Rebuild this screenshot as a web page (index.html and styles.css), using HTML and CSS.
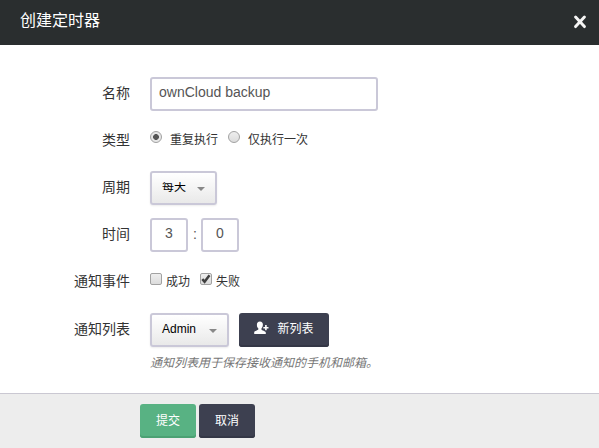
FILE: index.html
```html
<!DOCTYPE html>
<html lang="zh-CN">
<head>
<meta charset="utf-8">
<title>创建定时器</title>
<link rel="stylesheet" href="styles.css">
</head>
<body>
<form class="dialog">
  <header class="header">
    <h1>创建定时器</h1>
    <button type="button" class="close" aria-label="关闭"><svg width="14" height="14" viewBox="0 0 14 14"><path d="M2.6 2 11.4 11.6M11.4 2 2.6 11.6" fill="none" stroke="#f5f5f5" stroke-width="2.9" stroke-linecap="round"/></svg></button>
  </header>
  <main class="fields">
    <div class="row">
      <label class="label" for="name">名称</label>
      <input class="input name" id="name" type="text" value="ownCloud backup">
    </div>
    <div class="row">
      <span class="label">类型</span>
      <label class="choice radio-choice first"><span class="radio checked"></span>重复执行</label>
      <label class="choice radio-choice"><span class="radio"></span>仅执行一次</label>
    </div>
    <div class="row">
      <span class="label">周期</span>
      <div class="select period"><span class="value clipped">每天</span><span class="caret"></span></div>
    </div>
    <div class="row">
      <span class="label">时间</span>
      <input class="input time" type="text" value="3">
      <span class="colon">:</span>
      <input class="input time" type="text" value="0">
    </div>
    <div class="row events">
      <span class="label">通知事件</span>
      <label class="choice success"><span class="checkbox"></span>成功</label>
      <label class="choice"><span class="checkbox"><svg width="12" height="12" viewBox="0 0 12 12"><path d="M2.3 6.1 4.6 8.8 9.5 2.2" fill="none" stroke="#404040" stroke-width="2.5"/></svg></span>失败</label>
    </div>
    <div class="row">
      <span class="label">通知列表</span>
      <div class="select list"><span class="value">Admin</span><span class="caret"></span></div>
      <button type="button" class="btn dark new-list"><svg width="15" height="14" viewBox="0 0 15 14"><path d="M5.9.4C7.9.4 9 1.8 8.9 3.7 8.8 5.4 8.2 6.6 7.5 7.3V8.7C7.8 9.6 11.5 9.8 11.8 11.4V13H.2V11.3C.5 9.8 4 9.5 4.3 8.6V7.3C3.4 6.6 2.9 5.3 2.9 3.7 2.8 1.8 3.9.4 5.9.4Z" fill="#fff"/><path d="M11.9 4.1V9.3M9.3 6.7H14.5" fill="none" stroke="#fff" stroke-width="1.6"/></svg>新列表</button>
    </div>
    <p class="hint">通知列表用于保存接收通知的手机和邮箱。</p>
  </main>
  <footer class="footer">
    <button type="button" class="btn green">提交</button>
    <button type="button" class="btn dark">取消</button>
  </footer>
</form>
</body>
</html>
```
FILE: styles.css
```css
* { box-sizing: border-box; }
body {
  margin: 0;
  background: #fff;
  color: #333;
  font: 14px/20px "Liberation Sans", "Noto Sans CJK SC", sans-serif;
}
button, input { font-family: inherit; }
.dialog { display: flex; flex-direction: column; height: 448px; overflow: hidden; }
.header {
  display: flex;
  align-items: center;
  justify-content: space-between;
  height: 45px;
  padding: 0 12px 4px 20px;
  background: #2a2e2f;
}
.header h1 { margin: 0; color: #fff; font-size: 16px; font-weight: 400; line-height: 24px; }
.close { display: flex; margin-top: 3px; padding: 0; border: 0; background: none; }
.fields { flex: 1; padding-top: 32px; }
.row { display: flex; height: 34px; margin-bottom: 13px; }
.row.events { margin-bottom: 14px; }
.label { width: 130px; margin-right: 20px; padding-top: 6px; text-align: right; }
.input {
  height: 34px;
  padding: 0 7px 5px;
  border: 2px solid #cac8d8;
  border-radius: 3px;
  background: #fff;
  color: #555;
  font-size: 14px;
}
.name { width: 228px; }
.time { width: 38px; text-align: center; }
.colon { width: 13px; padding: 6px 0 0 1px; color: #555; text-align: center; }
.choice { display: flex; padding-top: 6px; font-size: 12px; }
.first { width: 78px; }
.radio {
  width: 12px;
  height: 12px;
  margin: 1px 8px 0 0;
  border: 1px solid #a2a2a2;
  border-radius: 50%;
  background: linear-gradient(#eee, #dcdcdc);
}
.radio.checked { background: radial-gradient(circle, #555 0 2.6px, transparent 3.2px), #e7e7e7; }
.events .choice { padding-top: 7px; }
.success { width: 50px; }
.checkbox {
  width: 12px;
  height: 12px;
  margin: 1px 4px 0 0;
  border: 1px solid #a2a2a2;
  border-radius: 2px;
  background: linear-gradient(#eee, #dcdcdc);
}
.checkbox svg { display: block; margin: -1px; overflow: visible; }
.select {
  display: flex;
  justify-content: space-between;
  height: 34px;
  padding: 8px 10px 0;
  border: 2px solid #cac8d8;
  border-radius: 3px;
  background: linear-gradient(#fff, #e9e9e9);
  box-shadow: 0 1px 2px rgba(0, 0, 0, .08);
  color: #000;
  font-size: 12px;
  line-height: 12px;
}
.period { width: 67px; }
.list { width: 79px; }
.value { height: 13px; }
.clipped { clip-path: inset(1px 0 0); }
.caret {
  width: 0;
  height: 0;
  margin-top: 6px;
  border: 4px solid transparent;
  border-top-color: #888;
  border-bottom: 0;
}
.btn {
  display: flex;
  align-items: center;
  justify-content: center;
  width: 56px;
  height: 34px;
  padding: 0 0 3px;
  border: 0;
  border-radius: 3px;
  color: #fff;
  font-size: 12px;
}
.dark { background: #3d4050; box-shadow: inset 0 -2px #343746; }
.green { background: #58b283; box-shadow: inset 0 -2px #4ba173; }
.new-list { width: 90px; margin-left: 10px; padding-bottom: 5px; }
.new-list svg { margin: 1px 8px 0 0; }
.hint { margin: -7px 0 0 150px; color: #777; font-size: 12px; font-style: italic; }
.footer {
  display: flex;
  gap: 3px;
  height: 55px;
  padding: 10px 0 0 140px;
  border-top: 1px solid #cac8d2;
  background: #ededed;
}
```
